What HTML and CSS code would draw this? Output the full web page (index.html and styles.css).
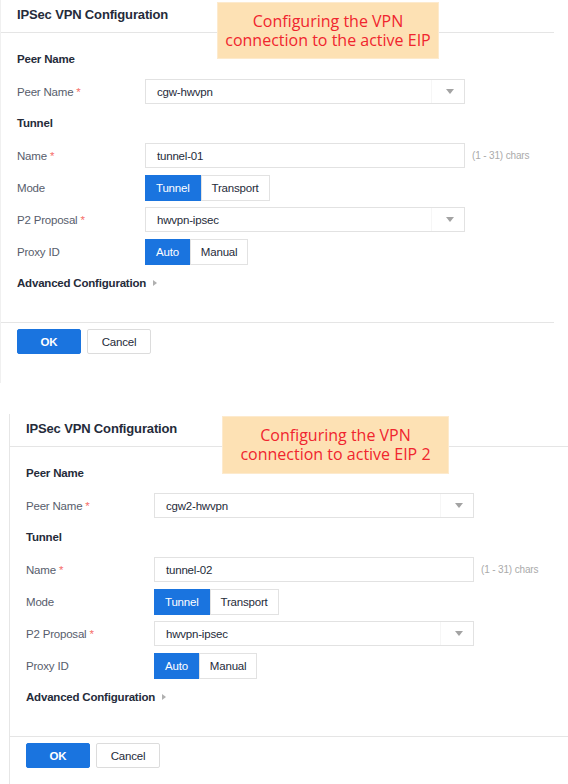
FILE: index.html
```html
<!DOCTYPE html>
<html lang="en">
<head>
<meta charset="utf-8">
<title>IPSec VPN Configuration</title>
<link rel="stylesheet" href="styles.css">
</head>
<body>
<div class="panel">
  <div class="panel-head"><h2 class="panel-title">IPSec VPN Configuration</h2></div>
  <div class="panel-body">
    <div class="section">Peer Name</div>
    <div class="row">
      <span class="label">Peer Name <span class="req">*</span></span>
      <div class="field select"><span class="value">cgw-hwvpn</span><span class="arrow"><i class="tri"></i></span></div>
    </div>
    <div class="section">Tunnel</div>
    <div class="row">
      <span class="label">Name <span class="req">*</span></span>
      <div class="field"><span class="value">tunnel-01</span></div>
      <span class="hint">(1 - 31) chars</span>
    </div>
    <div class="row">
      <span class="label">Mode</span>
      <div class="seg"><button class="seg-btn active">Tunnel</button><button class="seg-btn">Transport</button></div>
    </div>
    <div class="row">
      <span class="label">P2 Proposal <span class="req">*</span></span>
      <div class="field select"><span class="value">hwvpn-ipsec</span><span class="arrow"><i class="tri"></i></span></div>
    </div>
    <div class="row">
      <span class="label">Proxy ID</span>
      <div class="seg"><button class="seg-btn active">Auto</button><button class="seg-btn">Manual</button></div>
    </div>
    <div class="section adv">Advanced Configuration <i class="caret"></i></div>
  </div>
  <div class="panel-foot">
    <button class="btn btn-primary">OK</button>
    <button class="btn">Cancel</button>
  </div>
  <div class="note">Configuring the VPN<br>connection to the active EIP</div>
</div>

<div class="panel panel-second">
  <div class="panel-head"><h2 class="panel-title">IPSec VPN Configuration</h2></div>
  <div class="panel-body">
    <div class="section">Peer Name</div>
    <div class="row">
      <span class="label">Peer Name <span class="req">*</span></span>
      <div class="field select"><span class="value">cgw2-hwvpn</span><span class="arrow"><i class="tri"></i></span></div>
    </div>
    <div class="section">Tunnel</div>
    <div class="row">
      <span class="label">Name <span class="req">*</span></span>
      <div class="field"><span class="value">tunnel-02</span></div>
      <span class="hint">(1 - 31) chars</span>
    </div>
    <div class="row">
      <span class="label">Mode</span>
      <div class="seg"><button class="seg-btn active">Tunnel</button><button class="seg-btn">Transport</button></div>
    </div>
    <div class="row">
      <span class="label">P2 Proposal <span class="req">*</span></span>
      <div class="field select"><span class="value">hwvpn-ipsec</span><span class="arrow"><i class="tri"></i></span></div>
    </div>
    <div class="row">
      <span class="label">Proxy ID</span>
      <div class="seg"><button class="seg-btn active">Auto</button><button class="seg-btn">Manual</button></div>
    </div>
    <div class="section adv">Advanced Configuration <i class="caret"></i></div>
  </div>
  <div class="panel-foot">
    <button class="btn btn-primary">OK</button>
    <button class="btn">Cancel</button>
  </div>
  <div class="note note-second">Configuring the VPN<br>connection to active EIP 2</div>
</div>
</body>
</html>
```

FILE: styles.css
```css
html, body {
  margin: 0;
  padding: 0;
  overflow: hidden;
  background: #fff;
}

body {
  width: 568px;
  height: 784px;
  font-family: "Liberation Sans", Arial, sans-serif;
  font-size: 11.5px;
  letter-spacing: -0.2px;
  color: #252b3a;
}

.panel {
  position: relative;
  width: 553px;
  border-left: 1px solid #f0f0f0;
  background: #fff;
}

.panel-second {
  margin: 31px 0 0 9px;
  width: 572px;
  border-left-color: #e6e6e6;
}

.panel-head {
  height: 32px;
  line-height: 30px;
  padding-left: 16px;
  border-bottom: 1px solid #e5e5e5;
}

.panel-title {
  margin: 0;
  font-size: 13px;
  font-weight: bold;
  letter-spacing: -0.15px;
  color: #252b3a;
}

.panel-body {
  padding: 10px 0 23px 16px;
}

.section {
  height: 32px;
  display: flex;
  align-items: center;
  font-weight: bold;
  color: #252b3a;
}

.row {
  height: 32px;
  display: flex;
  align-items: center;
  padding-top: 1px;
  box-sizing: border-box;
}

.label {
  flex: none;
  width: 128px;
  color: #575d6c;
}

.req {
  color: #f66f6a;
}

.field {
  box-sizing: border-box;
  width: 320px;
  height: 25px;
  border: 1px solid #e2e2e2;
  padding-left: 11px;
  display: flex;
  align-items: center;
  background: #fff;
  color: #252b3a;
}

.value {
  flex: 1;
}

.arrow {
  flex: none;
  width: 33px;
  height: 100%;
  box-sizing: border-box;
  border-left: 1px solid #f6f6f6;
  padding-left: 4px;
  display: flex;
  align-items: center;
  justify-content: center;
}

.tri {
  width: 0;
  height: 0;
  border-left: 4px solid transparent;
  border-right: 4px solid transparent;
  border-top: 5px solid #a3a3a3;
}

.hint {
  margin-left: 7px;
  font-size: 10px;
  letter-spacing: -0.15px;
  color: #aaaaaa;
}

.seg {
  display: flex;
}

.seg-btn {
  height: 26px;
  padding: 0 10px;
  margin: 0;
  border: 1px solid #e2e2e2;
  background: #fff;
  color: #252b3a;
  font-family: inherit;
  font-size: inherit;
  letter-spacing: inherit;
}

.seg-btn.active {
  background: #1a74df;
  border-color: #1a74df;
  color: #fff;
}

.adv {
  gap: 7px;
}

.caret {
  width: 0;
  height: 0;
  border-top: 3px solid transparent;
  border-bottom: 3px solid transparent;
  border-left: 4px solid #b0b0b0;
}

.panel-foot {
  border-top: 1px solid #e5e5e5;
  padding: 6px 0 29px 16px;
  display: flex;
  gap: 6px;
}

.btn {
  box-sizing: border-box;
  width: 64px;
  height: 25px;
  margin: 0;
  padding: 0;
  border: 1px solid #dcdcdc;
  border-radius: 2px;
  background: #fff;
  color: #252b3a;
  font-family: inherit;
  font-size: inherit;
  letter-spacing: inherit;
}

.btn-primary {
  background: #1a74df;
  border-color: #1a74df;
  color: #fff;
  font-weight: bold;
}

.note {
  position: absolute;
  top: 2px;
  left: 216px;
  box-sizing: border-box;
  width: 222px;
  height: 57px;
  display: flex;
  align-items: center;
  justify-content: center;
  text-align: center;
  background: #fde1b4;
  border: 1px solid #fdeacd;
  color: #f0252e;
  font-family: "Open Sans", "Liberation Sans", sans-serif;
  font-size: 16px;
  line-height: 19px;
  letter-spacing: 0;
}

.note-second {
  left: 212px;
  width: 227px;
  height: 58px;
}
```
